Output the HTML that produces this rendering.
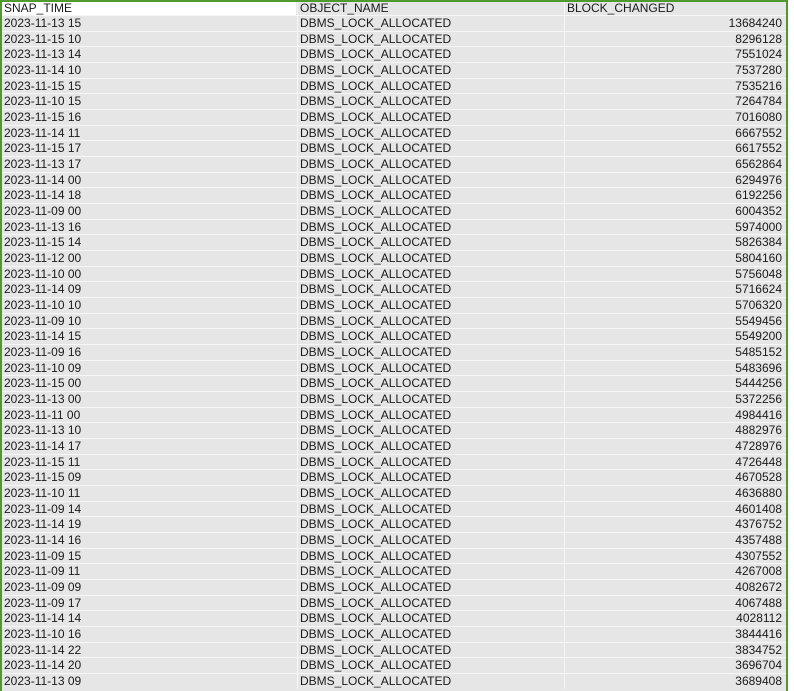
<!DOCTYPE html><html><head><style>
body{margin:0;width:794px;height:689px;overflow:hidden;background:#fff;font-family:"Liberation Sans",Arial,sans-serif;font-size:12px;color:#1a1a1a}
#g{position:absolute;left:0;top:0;width:784px;height:689px;border:2px solid #4f9a2e;border-bottom:none;background:#e6e6e6}
.r{position:absolute;left:0;width:784px;height:15.67px;border-bottom:1px solid #f6f6f6;box-sizing:border-box;line-height:15px}
.c{position:absolute;top:0;height:100%;white-space:nowrap}
.a{left:2px;width:292px}.b{left:295px;width:265px;border-left:1px solid #f6f6f6;padding-left:2px}.d{left:562px;width:220px;border-left:1px solid #f6f6f6;text-align:right;padding-right:2px;box-sizing:border-box}
.h .a{background:#fff;left:0;padding-left:2px}
</style></head><body><div id="g"></div>
<div style="position:absolute;left:2px;top:0;width:784px;height:689px;overflow:hidden" id="t"></div>
<script>
var d=`2023-11-13 15 13684240
2023-11-15 10 8296128
2023-11-13 14 7551024
2023-11-14 10 7537280
2023-11-15 15 7535216
2023-11-10 15 7264784
2023-11-15 16 7016080
2023-11-14 11 6667552
2023-11-15 17 6617552
2023-11-13 17 6562864
2023-11-14 00 6294976
2023-11-14 18 6192256
2023-11-09 00 6004352
2023-11-13 16 5974000
2023-11-15 14 5826384
2023-11-12 00 5804160
2023-11-10 00 5756048
2023-11-14 09 5716624
2023-11-10 10 5706320
2023-11-09 10 5549456
2023-11-14 15 5549200
2023-11-09 16 5485152
2023-11-10 09 5483696
2023-11-15 00 5444256
2023-11-13 00 5372256
2023-11-11 00 4984416
2023-11-13 10 4882976
2023-11-14 17 4728976
2023-11-15 11 4726448
2023-11-15 09 4670528
2023-11-10 11 4636880
2023-11-09 14 4601408
2023-11-14 19 4376752
2023-11-14 16 4357488
2023-11-09 15 4307552
2023-11-09 11 4267008
2023-11-09 09 4082672
2023-11-09 17 4067488
2023-11-14 14 4028112
2023-11-10 16 3844416
2023-11-14 22 3834752
2023-11-14 20 3696704
2023-11-13 09 3689408`.split("\n");
var h='<div class="r h" style="top:2px;height:14px;line-height:13px"><div class="c a">SNAP_TIME</div><div class="c b">OBJECT_NAME</div><div class="c d" style="text-align:left;padding-left:2px">BLOCK_CHANGED</div></div>';
d.forEach(function(l,i){var p=l.split(" ");h+='<div class="r" style="top:'+(16+i*15.67)+'px"><div class="c a">'+p[0]+' '+p[1]+'</div><div class="c b">DBMS_LOCK_ALLOCATED</div><div class="c d">'+p[2]+'</div></div>';});
document.getElementById('t').innerHTML=h;
</script></body></html>
